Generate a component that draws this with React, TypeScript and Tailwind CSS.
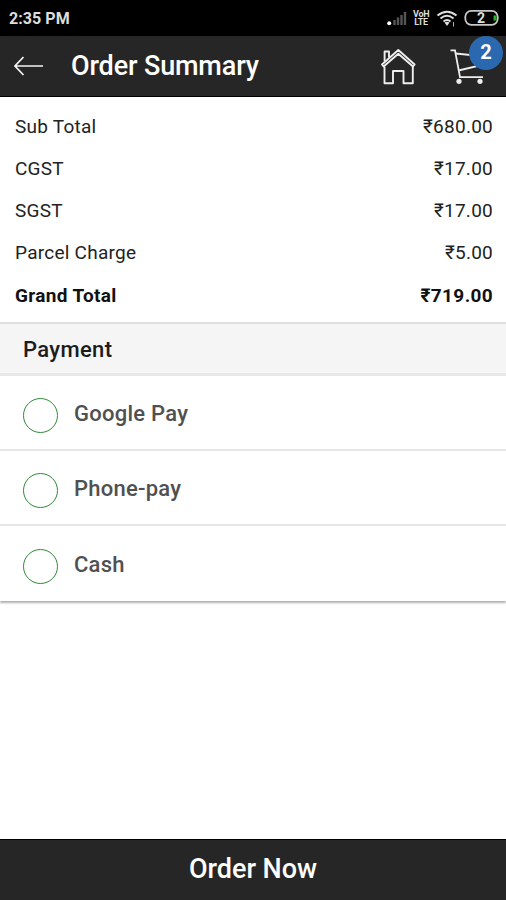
const charges = [
  { label: "Sub Total", amount: "₹680.00" },
  { label: "CGST", amount: "₹17.00" },
  { label: "SGST", amount: "₹17.00" },
  { label: "Parcel Charge", amount: "₹5.00" },
];

const methods = ["Google Pay", "Phone-pay", "Cash"];

function StatusBar() {
  return (
    <div className="flex h-9 items-center justify-between bg-black pl-[9px] text-[#dedede]">
      <span className="pt-0.5 text-base font-bold tracking-[0.05px]">2:35 PM</span>
      <div className="flex items-center">
        <svg width="27" height="36" viewBox="386 0 27 36" fill="none">
          <circle cx="389.2" cy="23.3" r="2" fill="#fff" />
          <path
            d="M394.5 20v5M398 17.5V25M401.5 15v10M405 12v13"
            stroke="#555"
            strokeWidth="2.4"
          />
        </svg>
        <div className="w-4 text-center text-[9px] font-bold leading-[8px] tracking-[-0.3px]">
          VoH
          <br />
          LTE
        </div>
        <svg width="77" height="36" viewBox="429 0 77 36" fill="none">
          <g stroke="#dedede" strokeWidth="2">
            <path d="M437.5 15.5Q447 8 456.5 15.5" />
            <path d="M440.5 18.5Q447 13 453.5 18.5" />
            <path d="M443.5 21.5Q447 18.5 450.5 21.5" />
          </g>
          <path d="M444.5 22.5Q447 21 449.5 22.5L447 26Z" fill="#dedede" />
          <path d="M453.5 22v4.5" stroke="#aaa" />
          <rect x="465.3" y="10.8" width="32.4" height="14" rx="6" stroke="#c8c8c8" strokeWidth="1.8" />
          <path d="M493.5 15.5h3v5h-3z" fill="#22b422" />
          <text x="481" y="22.8" fontSize="14" fontWeight="700" fill="#dedede" textAnchor="middle">
            2
          </text>
        </svg>
      </div>
    </div>
  );
}

function Header() {
  return (
    <header className="flex h-[61px] items-center border-b border-black bg-[#262626] text-white">
      <svg width="30" height="22" viewBox="0 0 30 22" className="ml-[14px] shrink-0" fill="none" stroke="#f4f4f4" strokeWidth="1.7">
        <path d="M9.5 2L1 11L9.5 20M1 11H29" />
      </svg>
      <h1 className="ml-[27px] w-[280px] shrink-0 text-[27px] font-medium tracking-[-0.15px]">Order Summary</h1>
      <svg width="36" height="38" viewBox="380 47 36 38" className="ml-[29px] shrink-0" fill="none" stroke="#eee" strokeWidth="1.9" strokeLinejoin="round">
        <path d="M382 64.5L398.3 50L414.6 64.5L413 66.5L398.3 53.8L383.6 66.5Z" />
        <path d="M384.6 61.5V51.5H389V57.5" />
        <path d="M384.5 66.5V83.2H393V71H403.5V83.2H412.8V66.5" />
      </svg>
      <div className="relative ml-[34px] h-9 w-14 shrink-0">
        <svg width="40" height="38" viewBox="450 47 40 38" className="-mt-px" fill="none" stroke="#eee" strokeWidth="1.8">
          <path d="M450.5 50.3H455L460 77.2H483" />
          <path d="M455.5 53.5L486 56.5L482 65L458.5 70.5" />
          <circle cx="459" cy="81.3" r="2.6" fill="#eee" stroke="none" />
          <circle cx="480" cy="81.3" r="2.6" fill="#eee" stroke="none" />
        </svg>
        <span className="absolute -top-3 left-[19px] flex size-[34px] items-center justify-center rounded-full bg-[#2a68b0] pb-0.5 text-xl font-bold">
          2
        </span>
      </div>
    </header>
  );
}

export default function App() {
  return (
    <div className="flex h-[900px] w-[506px] flex-col overflow-hidden bg-white font-['Roboto',sans-serif]">
      <StatusBar />
      <Header />

      <dl className="flex h-[225px] flex-col pl-[15px] pr-[13px] pt-[9px] text-[19px] tracking-[0.25px] text-[#222]">
        {charges.map((charge) => (
          <div key={charge.label} className="flex h-[42.2px] shrink-0 items-center justify-between">
            <dt>{charge.label}</dt>
            <dd>{charge.amount}</dd>
          </div>
        ))}
        <div className="flex h-[42.2px] shrink-0 items-center justify-between font-bold tracking-[0.35px] text-[#111]">
          <dt>Grand Total</dt>
          <dd>{"₹719.00"}</dd>
        </div>
      </dl>

      <section className="shadow-[0_2px_2px_#b0b0b0]">
        <h2 className="flex h-[54px] items-center border-b-[3px] border-t-2 border-b-[#e8e8e8] border-t-[#dfdfdf] bg-[#f5f5f5] pl-[23px] pt-[2px] text-[22px] font-medium tracking-[0.35px] text-[#1c1c1c]">
          Payment
        </h2>
        <ul className="divide-y-2 divide-[#e6e6e6] bg-white">
          {methods.map((method) => (
            <li key={method} className="flex h-[75px] items-center pl-[23px]">
              <span className="mt-[5px] size-[35px] rounded-full border-[1.5px] border-[#2f8a35]" />
              <span className="ml-4 pt-px text-[22px] font-medium tracking-[0.25px] text-[#505050]">
                {method}
              </span>
            </li>
          ))}
        </ul>
      </section>

      <button className="mt-auto flex h-[61px] items-center justify-center border-t border-black bg-[#262626] pb-0.5 text-[27px] font-medium tracking-[-0.05px] text-white">
        Order Now
      </button>
    </div>
  );
}
